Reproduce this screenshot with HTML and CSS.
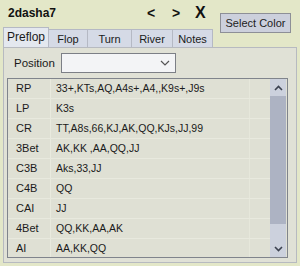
FILE: index.html
```html
<!DOCTYPE html>
<html>
<head>
<meta charset="utf-8">
<link rel="stylesheet" href="styles.css">
</head>
<body>
<div class="header">
  <div class="title">2dasha7</div>
  <span class="nav nav-prev">&lt;</span>
  <span class="nav nav-next">&gt;</span>
  <span class="nav nav-close">X</span>
  <button class="select-color">Select Color</button>
</div>
<div class="tabs">
  <div class="tab active w1">Preflop</div>
  <div class="tab w2">Flop</div>
  <div class="tab w3">Turn</div>
  <div class="tab w4">River</div>
  <div class="tab w5">Notes</div>
</div>
<div class="panel">
  <div class="pos-row">
    <span class="pos-label">Position</span>
    <div class="select">
      <svg class="chev" width="10" height="6" viewBox="0 0 10 6"><path d="M1 1 L5 5 L9 1" fill="none" stroke="#555" stroke-width="1.2"/></svg>
    </div>
  </div>
  <div class="list">
    <div class="rows">
      <div class="row"><span class="c1">RP</span><span class="c2">33+,KTs,AQ,A4s+,A4,,K9s+,J9s</span></div>
      <div class="row"><span class="c1">LP</span><span class="c2">K3s</span></div>
      <div class="row"><span class="c1">CR</span><span class="c2">TT,A8s,66,KJ,AK,QQ,KJs,JJ,99</span></div>
      <div class="row"><span class="c1">3Bet</span><span class="c2">AK,KK ,AA,QQ,JJ</span></div>
      <div class="row"><span class="c1">C3B</span><span class="c2">Aks,33,JJ</span></div>
      <div class="row"><span class="c1">C4B</span><span class="c2">QQ</span></div>
      <div class="row"><span class="c1">CAI</span><span class="c2">JJ</span></div>
      <div class="row"><span class="c1">4Bet</span><span class="c2">QQ,KK,AA,AK</span></div>
      <div class="row"><span class="c1">AI</span><span class="c2">AA,KK,QQ</span></div>
    </div>
    <div class="scrollbar">
      <div class="sb-btn"><svg width="9" height="6" viewBox="0 0 9 6"><path d="M1 5 L4.5 1.5 L8 5" fill="none" stroke="#3c4250" stroke-width="1.6"/></svg></div>
      <div class="sb-track"><div class="sb-thumb"></div></div>
      <div class="sb-btn"><svg width="9" height="6" viewBox="0 0 9 6"><path d="M1 1 L4.5 4.5 L8 1" fill="none" stroke="#3c4250" stroke-width="1.6"/></svg></div>
    </div>
  </div>
</div>
</body>
</html>
```
FILE: styles.css
```css
html, body {
  margin: 0;
  padding: 0;
}
body {
  width: 300px;
  height: 266px;
  overflow: hidden;
  background: #e3e7c8;
  font-family: "Liberation Sans", Arial, sans-serif;
  font-size: 11px;
  color: #1a1a1a;
}
.header {
  display: flex;
  align-items: flex-start;
  height: 28px;
  padding-left: 8px;
}
.title {
  font-weight: bold;
  font-size: 12px;
  margin-top: 6px;
  width: 139px;
  color: #111;
}
.nav {
  font-weight: bold;
  font-size: 14px;
  margin-top: 5px;
  color: #111;
}
.nav-prev { width: 25px; }
.nav-next { width: 23px; }
.nav-close { width: 25px; font-size: 16px; margin-top: 4px; }
.select-color {
  margin-top: 13px;
  width: 71px;
  height: 20px;
  padding: 0;
  border: 1px solid #8d8f97;
  background: #ccd0dc;
  font-family: "Liberation Sans", Arial, sans-serif;
  font-size: 11px;
  color: #222;
  position: relative;
  z-index: 2;
}
.tabs {
  display: flex;
  height: 19px;
  padding-left: 3px;
  align-items: flex-end;
}
.tab {
  box-sizing: border-box;
  height: 18px;
  background: #d5dae6;
  border: 1px solid #b5b9c4;
  border-bottom: none;
  border-left: none;
  text-align: center;
  line-height: 18px;
  font-size: 11px;
}
.tab.active {
  height: 20px;
  background: #e4e8ef;
  border-left: 1px solid #b5b9c4;
  font-size: 12px;
  line-height: 19px;
  margin-top: -1px;
  position: relative;
  z-index: 1;
}
.w1 { width: 46px; }
.w2 { width: 39px; }
.w3 { width: 44px; }
.w4 { width: 41px; }
.w5 { width: 40px; }
.panel {
  box-sizing: border-box;
  margin: 0 3px 0 3px;
  height: 216px;
  background: #e0e1d6;
  border: 1px solid #b7bac0;
  padding: 5px 8px 0 3px;
}
.pos-row {
  display: flex;
  align-items: center;
  height: 20px;
}
.pos-label {
  width: 47px;
  padding-left: 7px;
  font-size: 11.5px;
}
.select {
  box-sizing: border-box;
  width: 115px;
  height: 20px;
  margin-left: 0;
  background: #f3f4f6;
  border: 1px solid #7c7f86;
  display: flex;
  align-items: center;
  justify-content: flex-end;
  padding-right: 5px;
}
.list {
  box-sizing: border-box;
  margin-top: 5px;
  height: 180px;
  border: 1px solid #80848c;
  background: #dfe0d4;
  display: flex;
  overflow: hidden;
  font-size: 10.5px;
}
.rows {
  flex: 1;
  background: linear-gradient(to right, transparent 42px, #e9eade 42px, #e9eade 43px, transparent 43px, transparent 241px, #e6e7db 241px, #e6e7db 242px, transparent 242px);
}
.row {
  display: flex;
  height: 19px;
  line-height: 19px;
  border-bottom: 1px solid #e8e9de;
}
.c1 {
  width: 48px;
  box-sizing: border-box;
  padding-left: 8px;
  font-size: 11px;
}
.c2 {
  padding-left: 0;
}
.scrollbar {
  width: 16px;
  margin-right: 1px;
  display: flex;
  flex-direction: column;
  background: #ccd1dd;
}
.sb-btn {
  height: 17px;
  display: flex;
  align-items: center;
  justify-content: center;
  background: #ccd1dd;
}
.sb-track {
  flex: 1;
  background: #ccd1dd;
}
.sb-thumb {
  height: 128px;
  background: #adb3c3;
}
```
